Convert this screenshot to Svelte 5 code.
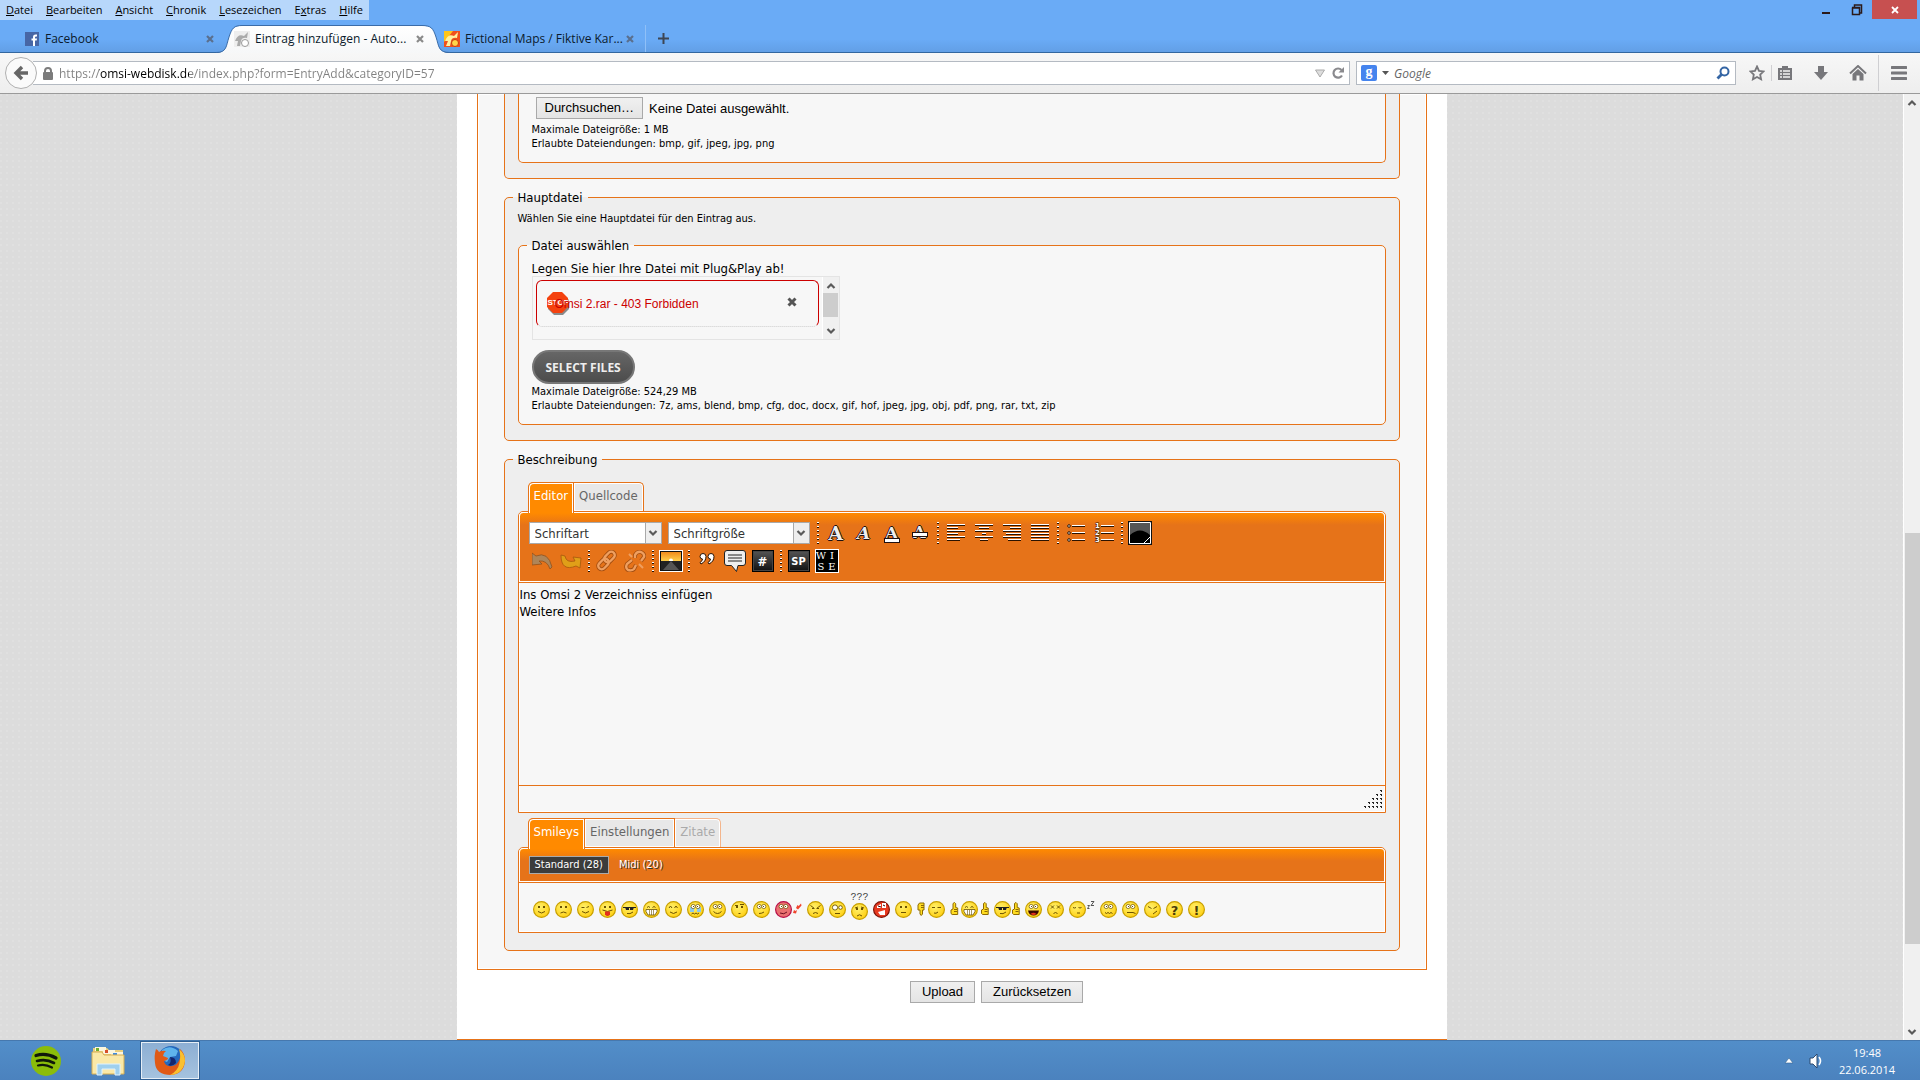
<script>
  const menus = [
    ['', 'D', 'atei'],
    ['', 'B', 'earbeiten'],
    ['', 'A', 'nsicht'],
    ['', 'C', 'hronik'],
    ['', 'L', 'esezeichen'],
    ['E', 'x', 'tras'],
    ['', 'H', 'ilfe'],
  ];

  const ink = '#6b5200';
  const line = (d, c = ink) => `<path d="${d}" fill="none" stroke="${c}"/>`;
  const fill = (d, c = ink) => `<path d="${d}" fill="${c}"/>`;
  const dots = fill('M5 5h2v2H5zM10 5h2v2h-2z');
  const bigEyes = `<g fill="#fff" stroke="${ink}" stroke-width=".7"><circle cx="6.200" cy="5.500" r="2.100"/><circle cx="10.800" cy="5.500" r="2.100"/></g>${fill('M6 5h1v1H6zM10 5h1v1h-1z')}`;
  const grin = `<path d="M3 8.500h11v2L12 14H5l-2-3.500z" fill="#fff" stroke="${ink}" stroke-width=".8"/><path d="M6.500 9v5M8.500 9v5M10.500 9v5" stroke="${ink}" stroke-width=".6"/>`;
  const shades = fill('M2 6h13v1H2zM4 6h4v3H5zM9 6h4l-1 3H9z', '#222');
  const thumbUp = (x) => `<path d="M${x} 9l2-1V2.500l1.500-1 1.200 1.200V6.500l2 .5v6.500h-5.500l-1.200-1z" fill="#ffdc20" stroke="#8d6a00"/>${line(`M${x + 3} 8.500h3M${x + 3} 10.500h3`, '#8d6a00')}`;

  const smileys = [
    { n: 'Lächeln', a: dots + line('M5 10.500q3.500 3 7 0') },
    { n: 'Traurig', a: dots + line('M5.500 12q3-2 6 0') },
    { n: 'Zwinkern', a: line('M4.500 6.500h3M9.500 6.500l2.500-1M5 10.500q3.500 3 7 0') },
    { n: 'Zunge', a: dots + line('M3.500 9q5 3 10 0') + fill('M6 10.500h5v3q-2.500 3-5 0z', '#e3301c') },
    { n: 'Cool', a: shades + line('M6 12.500q3 1 6-1.500') },
    { n: 'Lachen', a: line('M4 6.500q1.500-2 3 0M9.500 6.500q1.500-2 3 0') + grin },
    { n: 'Fröhlich', a: line('M4 7l1.500-2 1.500 2M9.500 7l1.500-2 1.500 2M5 11q3.500 3 7 0') },
    { n: 'Weinen', a: `<path d="M3 6h4v5H3zM10 6h4v5h-4z" fill="#8cc9ee"/>` + bigEyes + line('M4.500 13l1.500-1 1.500 1 1.500-1 1.500 1 1.500-1') },
    { n: 'Augenrollen', a: bigEyes + line('M4.500 10.500q4 4 8 0') },
    { n: 'Staunen', a: dots + line('M4 4.500h3M9 3.500h4M7.500 12.500h2') },
    { n: 'Skeptisch', a: bigEyes + line('M6 12.500q3 0 5-1.500') },
    { n: 'Verliebt', w: 27, tone: 'pink', a: bigEyes + line('M5 12q4 2 7-1', '#6b1020') + fill('M18 12l1-3 1.500 1 1.500-1-1 3.500zM21 7l1.500-3 1.200 1L26 2.500l.5 2-3.500 4z', '#f0442c') },
    { n: 'Böse', a: line('M3.500 4.500l4 3M13.500 4.500l-4 3M6 12.500q2.500-2 5 0') + fill('M5 7h2v1H5zM10 7h2v1h-2z') },
    { n: 'Verwirrt', a: `<g fill="#fff" stroke="${ink}" stroke-width=".9"><circle cx="6" cy="6.500" r="2.600"/><circle cx="11.500" cy="6.500" r="1.800"/></g>` + line('M6 12.500h5') },
    { n: 'Frage', mark: '???', a: dots + line('M4 5l3-1M10 4l3 1M6 13q2.500-2.500 5 0') },
    { n: 'Wütend', tone: 'red', a: fill('M4 5l4-2v4H4zM9 2h4v5H9zM5 11l7-2v5H7z', '#fff') + line('M5 5l3 1M10 4l2 1', '#300') },
    { n: 'Neutral', a: dots + line('M6 11.500h5') },
    { n: 'Daumen runter', w: 28, off: 11, a: line('M4 6.500h3M9.500 6.500h3.500M6 12q2 1 4-1'), side: `<path d="M1 4l1.500-2H7v7H5.500v4L4.200 14.500 3 13V9H1z" fill="#ffdc20" stroke="#8d6a00"/><path d="M4 4.500h3M4 6.500h3" stroke="#8d6a00"/>` },
    { n: 'Beide Daumen', w: 39, off: 11, a: line('M4 6.500q1.500-2 3 0M9.500 6.500q1.500-2 3 0') + grin, side: thumbUp(1) + thumbUp(31.5) },
    { n: 'Daumen hoch', w: 26, a: shades + line('M6 12.500q3 1 6-1.500'), side: thumbUp(18.5) },
    { n: 'Verrückt', a: bigEyes + `<path d="M3 9.500h11q-1 5-5.500 5T3 9.500z" fill="#3a0800"/><path d="M5.500 13q3-2.500 6 0-3 2-6 0z" fill="#e3301c"/>` },
    { n: 'Gequält', a: line('M4 4.500l3 3M7 4.500l-3 3M10 4.500l3 3M13 4.500l-3 3M6.500 12.500q2-2 4 0') },
    { n: 'Schlafen', w: 26, a: line('M4 6.500q1.500 1 3 0M9.500 6.500q1.500 1 3 0M8 12h3'), side: line('M18.500 4.500h2l-2 3h2M22 .5h3l-3 4h3', '#555') },
    { n: 'Übel', a: bigEyes + line('M5 11.500l1.500 1 1.500-1 1.500 1 1.500-1 1.500 1') },
    { n: 'Pfeifen', a: bigEyes + line('M5 11.500h6l2.500 1') },
    { n: 'Fies', a: line('M4 5.500l3.500 2M13 5.500l-3.500 2M9 13l4-3') },
    { n: 'Fragezeichen', glyph: '?', a: '' },
    { n: 'Ausrufezeichen', glyph: '!', a: '' },
  ];
  const tones = {
    yellow: ['url(#face)', '#c8a000'],
    pink: ['#ea7070', '#b81048'],
    red: ['#e83a20', '#7c1208'],
  };

  const aligns = [
    ['Linksbündig', [18, 11, 18, 11, 18, 13]],
    ['Zentriert', [18, 10, 18, 4, 18, 8]],
    ['Rechtsbündig', [18, 11, 18, 15, 18, 13]],
    ['Blocksatz', [18, 18, 18, 18, 18, 18]],
  ];
  const rowStart = (kind, w) => (kind === 'Zentriert' ? (18 - w) / 2 : kind === 'Rechtsbündig' ? 18 - w : 0);

  let url = $state('https://omsi-webdisk.de/index.php?form=EntryAdd&categoryID=57');
  let body = $state('Ins Omsi 2 Verzeichniss einfügen\nWeitere Infos');
</script>

{#snippet cross()}
  <svg width="8" height="8" viewBox="0 0 8 8"><path d="M1 1l6 6M7 1L1 7" stroke="currentColor" stroke-width="2.2" /></svg>
{/snippet}

{#snippet chevron(up)}
  <svg width="10" height="8" viewBox="0 0 10 8"><path d={up ? 'M1.500 6L5 2.500 8.500 6' : 'M1.500 2L5 5.500 8.500 2'} fill="none" stroke="#5a5a5a" stroke-width="2.200" /></svg>
{/snippet}

{#snippet sep()}<span class="sep"></span>{/snippet}

<svg class="defs" width="0" height="0" aria-hidden="true">
  <defs>
    <radialGradient id="face" cx=".4" cy=".35" r=".7"><stop offset="0" stop-color="#fff06a" /><stop offset="1" stop-color="#ffce10" /></radialGradient>
    <linearGradient id="sunset" x2="0" y2="1"><stop offset="0" stop-color="#f08a1c" /><stop offset="1" stop-color="#ffcf4a" /></linearGradient>
    <linearGradient id="tabfill" x2="0" y2="1"><stop offset="0" stop-color="#fff" /><stop offset="1" stop-color="#f6f7f8" /></linearGradient>
  </defs>
</svg>

<div class="window">
  <header class="chrome">
    <div class="titlebar">
      <nav class="menus">
        {#each menus as [pre, key, post]}<button>{pre}<u>{key}</u>{post}</button>{/each}
      </nav>
      <div class="controls">
        <button aria-label="Minimieren"><svg width="12" height="12"><path d="M2 8h8v2H2z" fill="#2b1a1a" /></svg></button>
        <button aria-label="Verkleinern"><svg width="12" height="12"><path d="M3.500 3V1h7v8H9M1 3.500h7.500v7H1.500v-7M1 4h8" fill="none" stroke="#2b1a1a" stroke-width="1.500" /></svg></button>
        <button class="close" aria-label="Schließen"><svg width="8" height="8" viewBox="0 0 8 8"><path d="M1 1l6 6M7 1L1 7" stroke="#fff" stroke-width="1.800" /></svg></button>
      </div>
    </div>
    <div class="tabstrip">
      <div class="tab">
        <svg width="16" height="16"><rect x="1" y="1" width="14" height="14" fill="#4766a5" /><path d="M9 15V9.500H7.500V7.500H9V6q0-2.500 2.500-2.500H13v2h-1q-1 0-1 1v1h2l-.3 2H11V15z" fill="#fff" /></svg>
        <span class="title">Facebook</span><button aria-label="Tab schließen">{@render cross()}</button>
      </div>
      <div class="tab active">
        <svg class="shape" width="234" height="28" viewBox="0 0 234 28"><path d="M0 28C11 28 10 21 13 12 16 3 18 1 26 1H206C215 1 217 3 220 12 223 21 222 28 234 28z" fill="url(#tabfill)" /><path d="M0 27.500C11 27.500 10 21 13 12 16 3 18 .5 26 .5H206C215 .5 217 3 220 12 223 21 222 27.500 234 27.500" fill="none" stroke="#3b6ca8" /></svg>
        <svg width="16" height="16"><path d="M0 0h16v16H0z" fill="#eee" /><path d="M1 10q3-8 9-5l4-4-1 6q-5-1-6 3l-1 5H3l1-5z" fill="#aaa" /><circle cx="11" cy="12" r="3.500" fill="#fff" stroke="#999" /></svg>
        <span class="title">Eintrag hinzufügen - Auto...</span><button aria-label="Tab schließen">{@render cross()}</button>
      </div>
      <div class="tab">
        <svg width="16" height="16"><path d="M0 0h16v16H0z" fill="#f0501c" /><path d="M0 0h9L0 11z" fill="#ffc61a" /><path d="M1 10q3-8 9-5l4-4-1 6q-5-1-6 3l-1 5H2l2-5z" fill="#fff2a0" /><circle cx="11" cy="12" r="3.500" fill="#ffd64a" stroke="#c8380c" /></svg>
        <span class="title">Fictional Maps / Fiktive Kar...</span><button aria-label="Tab schließen">{@render cross()}</button>
      </div>
      <button class="newtab" aria-label="Neuer Tab"><svg width="11" height="11"><path d="M5.500 0v11M0 5.500h11" stroke="#3d4654" stroke-width="2" /></svg></button>
    </div>
    <div class="navbar">
      <button class="back" aria-label="Zurück"><svg width="16" height="16"><path d="M9 2L3 8l6 6M3 8h12" fill="none" stroke="#666" stroke-width="3.400" /></svg></button>
      <div class="address">
        <svg width="10" height="13"><rect y="5" width="10" height="8" rx="1" fill="#7c7c7c" /><path d="M2 6V4q0-3 3-3t3 3v2" fill="none" stroke="#7c7c7c" stroke-width="2" /></svg>
        <input class="url" aria-label="Adresse" bind:value={url} />
        <svg width="10" height="9"><path d="M.5 1h9L5 8z" fill="#ddd" stroke="#aaa" /></svg>
        <button aria-label="Neu laden"><svg width="14" height="14"><path d="M11 9.500A4.600 4.600 0 1 1 10.500 4" fill="none" stroke="#8a8a8e" stroke-width="2.200" /><path d="M7.500 6.500h5.500V1z" fill="#8a8a8e" /></svg></button>
      </div>
      <div class="search">
        <span class="engine">g</span>
        <svg width="7" height="4"><path d="M0 0h7L3.500 4z" fill="#555" /></svg>
        <input aria-label="Suche" placeholder="Google" />
        <svg width="14" height="14"><circle cx="8.500" cy="5.500" r="4" fill="none" stroke="#3465a4" stroke-width="2" /><path d="M5.500 8.500L1.500 12.500" stroke="#3465a4" stroke-width="2.800" /></svg>
      </div>
      <div class="actions">
        <button aria-label="Lesezeichen"><svg width="16" height="16"><path d="M8 1.500l2 4.300 4.600.6-3.400 3.200.9 4.700L8 12l-4.100 2.300.9-4.700L1.400 6.400 6 5.800z" fill="none" stroke="#77777b" stroke-width="1.800" /></svg></button>
        <span class="bar short"></span>
        <button aria-label="Lesezeichenliste"><svg width="16" height="16"><path d="M1 3h4V1h6v2h4v12H1z" fill="#77777b" /><path d="M3 6h2m1 0h7M3 9h2m1 0h7M3 12h2m1 0h7" stroke="#f4f4f4" stroke-width="1.500" /></svg></button>
        <button class="down" aria-label="Downloads"><svg width="16" height="16"><path d="M5 1h6v6h4l-7 8-7-8h4z" fill="#77777b" /></svg></button>
        <button class="home" aria-label="Startseite"><svg width="18" height="16"><path d="M1 8.500L9 1l8 7.500" fill="none" stroke="#77777b" stroke-width="2" /><path d="M3.500 9L9 4l5.500 5v6.500h-4v-5h-3v5h-4z" fill="#77777b" /></svg></button>
        <span class="bar"></span>
        <button aria-label="Menü"><svg width="16" height="14"><path d="M1 1.500h14M1 7h14M1 12.500h14" stroke="#77777b" stroke-width="3" stroke-linecap="round" /></svg></button>
      </div>
    </div>
  </header>

  <div class="viewport">
    <main class="page">
      <form class="sheet" onsubmit={(e) => e.preventDefault()}>
        <div class="panel">
          <section class="group cut">
            <div class="inner cut">
              <div class="filepick">
                <label class="sysbtn" for="preview">Durchsuchen…</label>
                <input id="preview" class="hidden" type="file" />
                <span>Keine Datei ausgewählt.</span>
              </div>
              <p class="hint">Maximale Dateigröße: 1 MB</p>
              <p class="hint">Erlaubte Dateiendungen: bmp, gif, jpeg, jpg, png</p>
            </div>
          </section>

          <fieldset class="group">
            <legend>Hauptdatei</legend>
            <p class="lead">Wählen Sie eine Hauptdatei für den Eintrag aus.</p>
            <fieldset class="inner">
              <legend>Datei auswählen</legend>
              <p class="drop">Legen Sie hier Ihre Datei mit Plug&amp;Play ab!</p>
              <div class="queue">
                <div class="failed">
                  <span class="stop"><svg width="24" height="24"><path d="M8 2h9l6 6v9l-6 6H8l-6-6V8z" fill="#8a8a8a" /><path d="M7 0h9l6 6v9l-6 6H7l-6-6V6z" fill="#f4420f" /></svg><b>STOP</b></span>
                  <span class="name">Omsi 2.rar - 403 Forbidden</span>
                  <button aria-label="Entfernen"><svg width="10" height="10"><path d="M1.500 1.500l7 7M8.500 1.500l-7 7" stroke="#555" stroke-width="3" /></svg></button>
                </div>
                <div class="minibar">{@render chevron(true)}<span></span>{@render chevron(false)}</div>
              </div>
              <button class="select" type="button">SELECT FILES</button>
              <p class="hint">Maximale Dateigröße: 524,29 MB</p>
              <p class="hint">Erlaubte Dateiendungen: 7z, ams, blend, bmp, cfg, doc, docx, gif, hof, jpeg, jpg, obj, pdf, png, rar, txt, zip</p>
            </fieldset>
          </fieldset>

          <fieldset class="group last">
            <legend>Beschreibung</legend>
            <div class="cards">
              <button type="button" class="on">Editor</button><button type="button">Quellcode</button>
            </div>
            <div class="box">
              <div class="toolbar">
                <div class="row">
                  <span class="combo"><select aria-label="Schriftart"><option>Schriftart</option></select><i>{@render chevron(false)}</i></span>
                  <span class="combo wide"><select aria-label="Schriftgröße"><option>Schriftgröße</option></select><i>{@render chevron(false)}</i></span>
                  {@render sep()}
                  <button type="button" class="tool letter" aria-label="Fett">A</button>
                  <button type="button" class="tool letter ital" aria-label="Kursiv">A</button>
                  <button type="button" class="tool letter under" aria-label="Unterstrichen">A</button>
                  <button type="button" class="tool letter strike" aria-label="Durchgestrichen">A</button>
                  {@render sep()}
                  {#each aligns as [name, rows]}
                    <button type="button" class="tool" aria-label={name}>
                      <svg width="18" height="18">{#each rows as w, i}<rect x={rowStart(name, w)} y={i * 3} width={w} height="1" fill="#fff" /><rect x={rowStart(name, w)} y={i * 3 + 1} width={w} height="1" fill="#2a1200" />{/each}</svg>
                    </button>
                  {/each}
                  {@render sep()}
                  <button type="button" class="tool" aria-label="Liste">
                    <svg width="18" height="18">{#each [2, 9, 16] as y}<circle cx="2" cy={y} r="1.300" fill="#fff" stroke="#2a1200" /><path d="M5 {y - .5}h13" stroke="#fff" /><path d="M5 {y + .5}h13" stroke="#2a1200" />{/each}</svg>
                  </button>
                  <button type="button" class="tool" aria-label="Nummerierte Liste">
                    <svg width="20" height="24">{#each [5, 12, 19] as y, i}<text x="1" y={y + 2} font-size="7" font-weight="700" font-family="DejaVu Sans" fill="#fff" stroke="#2a1200" stroke-width="1" paint-order="stroke">{i + 1}</text><path d="M7 {y - .5}h13" stroke="#fff" /><path d="M7 {y + .5}h13" stroke="#2a1200" />{/each}</svg>
                  </button>
                  {@render sep()}
                  <button type="button" class="tool" aria-label="Textfarbe"><svg width="24" height="24"><path d="M0 0h24v24H0z" fill="#111" /><path d="M1.500 1.500h21v21h-21z" fill="#000" stroke="#fff" /><path d="M2 2h20v12q-10-9-20 0z" fill="#555" /><path d="M16 22l6-6" stroke="#fff" /></svg></button>
                </div>
                <div class="row second">
                  <button type="button" class="tool faded" aria-label="Rückgängig"><svg width="22" height="18"><path d="M0 1l4 3q12-5 16 11l-2 2Q15 8 7 9l3 3-10 1z" fill="#a88860" stroke="#8a4c1a" stroke-width=".8" /></svg></button>
                  <button type="button" class="tool faded" aria-label="Wiederholen"><svg width="22" height="18"><path d="M1 3l4 1q1 7 10 5l-2-4 8 1-1 10-4-2Q1 20 1 3z" fill="#e0a418" stroke="#a0560c" stroke-width=".8" /></svg></button>
                  {@render sep()}
                  <button type="button" class="tool faded" aria-label="Link"><svg width="22" height="22"><g fill="none" stroke="#9c4a10" stroke-width="4"><rect x="10" y="1" width="7" height="12" rx="3.500" transform="rotate(45 13.500 7)" /><rect x="4" y="8" width="7" height="12" rx="3.500" transform="rotate(45 7.500 14)" /></g><g fill="none" stroke="#f0a468" stroke-width="2.400"><rect x="10" y="1" width="7" height="12" rx="3.500" transform="rotate(45 13.500 7)" /><rect x="4" y="8" width="7" height="12" rx="3.500" transform="rotate(45 7.500 14)" /></g></svg></button>
                  <button type="button" class="tool faded" aria-label="Link entfernen"><svg width="22" height="22"><g fill="none" stroke="#9c4a10" stroke-width="4"><path d="M11 8V5q2-4 6-3 4 2 3 5l-3 4M8 10l-5 4q-2 4 1 6 4 1 6-1l2-4" /></g><g fill="none" stroke="#f0a468" stroke-width="2.400"><path d="M11 8V5q2-4 6-3 4 2 3 5l-3 4M8 10l-5 4q-2 4 1 6 4 1 6-1l2-4" /></g><path d="M5 4l3 3M15 14l4 4" stroke="#f0a468" stroke-width="2" /></svg></button>
                  {@render sep()}
                  <button type="button" class="tool" aria-label="Bild"><svg width="24" height="22"><path d="M0 0h24v22H0z" fill="#fff" /><path d="M1 1h22v20H1z" fill="#111" /><path d="M2 2h20v9H2z" fill="url(#sunset)" /><circle cx="12" cy="10.500" r="2" fill="#fff" /><path d="M2 11h20v9H2z" fill="#222" /><path d="M12 11l8 9H4z" fill="#555" /></svg></button>
                  {@render sep()}
                  <button type="button" class="tool quote" aria-label="Zitat"><svg width="18" height="14"><path d="M2 4.500a3 3 0 1 1 6 0q0 5-5 7.500l-1-1.500q2.500-1.500 2.500-3.500Q2 7 2 4.500zM10 4.500a3 3 0 1 1 6 0q0 5-5 7.500l-1-1.500q2.500-1.500 2.500-3.500Q10 7 10 4.500z" fill="#fff" stroke="#2a1200" /></svg></button>
                  <button type="button" class="tool" aria-label="Kommentar"><svg width="24" height="24"><path d="M4 1.500h16q2.500 0 2.500 2.500v10q0 2.500-2.500 2.500h-5l-1.500 6-5-6H4Q1.500 16.500 1.500 14V4Q1.500 1.500 4 1.500z" fill="#eee" stroke="#222" /><path d="M5 6h14M5 9h14M5 12h14" stroke="#222" stroke-width="1.200" /></svg></button>
                  <button type="button" class="tool" aria-label="Code"><span class="key hash">#</span></button>
                  {@render sep()}
                  <button type="button" class="tool" aria-label="Spoiler"><span class="key">SP</span></button>
                  <button type="button" class="tool" aria-label="Wise"><span class="wise"><b>W</b><b>I</b><b>S</b><b>E</b></span></button>
                </div>
              </div>
              <textarea aria-label="Beschreibung" bind:value={body}></textarea>
              <div class="status">
                <svg width="20" height="18">{#each [0, 1, 2, 3, 4] as r}{#each Array(r + 1) as _, c}<rect x={17 - c * 4} y={r * 4} width="2" height="1" fill="#222" /><rect x={18 - c * 4} y={r * 4 + 1} width="1" height="1" fill="#222" />{/each}{/each}</svg>
              </div>
            </div>
            <div class="cards low">
              <button type="button" class="on">Smileys</button><button type="button">Einstellungen</button><button type="button" class="off">Zitate</button>
            </div>
            <div class="box">
              <div class="toolbar sets">
                <button type="button" class="chosen">Standard (28)</button>
                <button type="button">Midi (20)</button>
              </div>
              <div class="smileys">
                {#each smileys as s}
                  {@const tone = tones[s.tone ?? 'yellow']}
                  <button type="button" class:low={s.mark} aria-label={s.n}>
                    {#if s.mark}<span class="mark">{s.mark}</span>{/if}
                    <svg width={s.w ?? 17} height="17" viewBox="0 0 {s.w ?? 17} 17">
                      <g transform="translate({s.off ?? 0} 0)">
                        <circle cx="8.500" cy="8.500" r="7.900" fill={tone[0]} stroke={tone[1]} stroke-width="1.200" />
                        {@html s.a}
                        {#if s.glyph}<text x="8.500" y="13.500" text-anchor="middle" font-family="DejaVu Sans" font-weight="700" font-size="13" fill="#4a3c08">{s.glyph}</text>{/if}
                      </g>
                      {@html s.side ?? ''}
                    </svg>
                  </button>
                {/each}
              </div>
            </div>
          </fieldset>
        </div>
        <div class="submit">
          <button class="sysbtn" type="submit">Upload</button>
          <button class="sysbtn" type="reset">Zurücksetzen</button>
        </div>
      </form>
    </main>
    <div class="scrollbar">
      {@render chevron(true)}
      <div class="track"><span></span></div>
      {@render chevron(false)}
    </div>
  </div>

  <footer class="taskbar">
    <button aria-label="Spotify"><svg width="32" height="32"><circle cx="16" cy="16" r="15" fill="#8bbd0a" /><g fill="none" stroke="#10180a" stroke-linecap="round"><path d="M6 10.500q10-3 20 2.500" stroke-width="3.200" /><path d="M7 16q9-2.500 17 2" stroke-width="2.600" /><path d="M8 20.500q7-2 14 2" stroke-width="2.200" /></g></svg></button>
    <button aria-label="Explorer"><svg width="34" height="32"><path d="M2 3h14l2 2h14v22H2z" fill="#e9cf80" /><path d="M4 2h11v4H4z" fill="#fbf6df" /><path d="M5 3h3v3H5z" fill="#6fae2e" /><path d="M12 5h12v4H12z" fill="#fbf6df" /><path d="M14 5h3v3h-3z" fill="#d8502a" /><path d="M20 7h12v4H20z" fill="#fbf6df" /><path d="M22 8h4v2h-4z" fill="#3e8be0" /><path d="M1 7h10l2 3h20v19H1z" fill="#fae9a8" stroke="#d6ae52" /><path d="M6 30V19h23v11h-5v-6H11v6z" fill="#9fd0ee" stroke="#dff2ff" /></svg></button>
    <button class="running" aria-label="Firefox"><svg width="32" height="32"><circle cx="17" cy="14" r="13" fill="#2468bc" /><path d="M8 5q8-6 16 1l-2 5-6 1-3 5-5-2z" fill="#5fb4ec" /><path d="M16 12q6 0 6 6-4 4-8 2 4-2 2-8z" fill="#14266e" /><path d="M2 4q2 1 3 3 3-2 7-1-3 2-3 5l5 2q0 2-4 3 1 6 8 5 6-1 8-8 1-5 0-9 5 4 5 12-1 13-14 14Q2 30 1 18 0 10 2 4z" fill="#e05a16" /><path d="M25 4q6 5 6 12-1 8-7 12-4 2-8 2 8-4 9.500-12Q27 10 25 4z" fill="#f9c030" /></svg></button>
    <div class="tray">
      <svg width="8" height="6"><path d="M4 0l4 5H0z" fill="#fff" stroke="#356494" stroke-width=".6" /></svg>
      <svg width="16" height="16"><path d="M2 5h3l4-4v14l-4-4H2z" fill="#fff" stroke="#2c4b70" /><path d="M11 4q3 4 0 8" fill="none" stroke="#fff" stroke-width="1.600" /></svg>
      <time>19:48<br />22.06.2014</time>
    </div>
  </footer>
</div>

<style>
  :global(body) { margin: 0; }
  * { box-sizing: border-box; }
  .window { display: flex; flex-direction: column; min-height: 100vh; font-family: "DejaVu Sans Condensed", "DejaVu Sans", sans-serif; font-size: 13px; color: #000; }
  .defs { position: absolute; }
  button { margin: 0; padding: 0; border: 0; background: none; font: inherit; color: inherit; }
  p { margin: 0; }
  svg { display: block; flex: none; }

  .chrome { font-family: "Open Sans", sans-serif; font-size: 12px; background: #6aabf6; }
  .titlebar { display: flex; justify-content: space-between; height: 20px; }
  .menus { display: flex; gap: 13px; padding: 0 6px; background: #b7d7fb; font-size: 11px; line-height: 20px; white-space: nowrap; }
  .controls { display: flex; height: 19px; padding-right: 3px; }
  .controls button { display: grid; place-items: center; width: 31px; }
  .controls button.close { width: 45px; background: #c75050; }

  .tabstrip { display: flex; align-items: center; gap: 20px; height: 33px; padding: 5px 0 0 24px; border-bottom: 1px solid #33679f; background: linear-gradient(#6aabf6 60%, #629fe6); }
  .tab { position: relative; display: flex; align-items: center; gap: 5px; width: 190px; height: 27px; color: #0b1a2c; }
  .tab > * { position: relative; }
  .tab .title { flex: 1; min-width: 0; white-space: nowrap; }
  .tab button { color: #5a6f8e; }
  .tab.active button { color: #8a8a8a; }
  .tab .shape { position: absolute; left: -18px; top: 0; }
  .newtab { display: grid; place-items: center; width: 36px; height: 27px; margin-left: -9px; border-left: 1px solid #8fc0f8; }

  .navbar { display: flex; align-items: center; height: 41px; padding-left: 5px; border-bottom: 1px solid #9a9a9a; background: linear-gradient(#f7f7f7, #eee); }
  .back { position: relative; display: grid; place-items: center; width: 32px; height: 32px; border: 1px solid #b0b0b0; border-radius: 50%; background: #fafafa; }
  .address, .search { display: flex; align-items: center; height: 24px; border: 1px solid #b4bac2; background: #fff; }
  .address { flex: 1; gap: 6px; margin-left: -4px; padding: 0 4px 0 10px; border-left: 0; }
  .address input, .search input { flex: 1; min-width: 0; padding: 0; border: 0; outline: 0; background: none; font: inherit; }
  .address .url { color: transparent; background: linear-gradient(90deg, #808080 40px, #000 40px, #000 130px, #808080 130px); background-clip: text; -webkit-background-clip: text; }
  .search { gap: 5px; width: 380px; margin-left: 6px; padding: 0 5px 0 4px; }
  .search input::placeholder { color: #666; font-style: italic; opacity: 1; }
  .engine { width: 16px; height: 16px; border-radius: 2px; background: #4584ee; color: #fff; font: 700 14px/13px "Liberation Serif", serif; text-align: center; }
  .actions { display: flex; align-items: center; justify-content: space-between; width: 184px; height: 40px; padding: 0 13px 0 13px; }
  .bar { width: 1px; height: 36px; background: #cfcfd2; }
  .bar.short { height: 16px; margin: 0 -6px; }
  .down { margin-left: 8px; }
  .home { margin-left: 8px; }

  .viewport { display: flex; flex: 1; }
  .page { flex: 1; display: flex; flex-direction: column; align-items: center; background: radial-gradient(circle at 1px 1px, #e0e0e0 1px, transparent 1px) 0 0 / 6px 6px #dcdcdc; }
  .sheet { display: flex; flex-direction: column; flex: 1; width: 100%; max-width: 990px; padding: 0 20px; border-bottom: 1px solid #e67319; background: #fff; }
  .panel { padding: 0 26px 18px; border: 1px solid #e67319; border-top: 0; background: #f7f7f7; box-shadow: inset 0 0 0 1px #fff; }
  .group, .inner { min-width: 0; margin: 0; border: 1px solid #e67319; border-radius: 5px; }
  .group { padding: 6px 13px 15px; background: #eee; }
  fieldset.group { margin-top: 9px; }
  .inner { padding: 8px 13px 11px; background: #f7f7f7; }
  fieldset.inner { margin-top: 10px; }
  .cut { padding-top: 0; border-top: 0; border-radius: 0 0 5px 5px; }
  .inner.cut { padding-top: 3px; }
  .group.last { padding-top: 14px; padding-bottom: 17px; }
  legend { margin-left: -5px; padding: 2px 5px 0; line-height: 16px; }
  .lead, .hint { font-size: 11px; line-height: 14px; }
  .drop { line-height: 14px; }

  .filepick { display: flex; align-items: center; gap: 6px; margin-bottom: 4px; padding-left: 4px; font: 13px "Liberation Sans", Arial, sans-serif; }
  .hidden { position: absolute; width: 1px; height: 1px; opacity: 0; }
  .sysbtn { height: 22px; padding: 0 11px; border: 1px solid #a9a9a9; background: linear-gradient(#f0f0f0, #e4e4e4); font: 13px/20px "Liberation Sans", Arial, sans-serif; }
  .filepick .sysbtn { padding: 0 8px; }

  .queue { display: flex; justify-content: space-between; width: 308px; height: 64px; border: 1px solid #e4e4e4; }
  .failed { display: flex; align-items: center; width: 283px; height: 47px; margin: 3px 0 0 3px; padding: 0 21px 0 9px; border: 1px solid #c00; border-bottom: 1px dotted #ccc; border-radius: 6px; color: #c00; font: 12px "Liberation Sans", Arial, sans-serif; }
  .stop { position: relative; }
  .stop b { position: absolute; left: 2px; top: 6px; color: #fff; font-size: 8px; }
  .name { position: relative; flex: 1; margin-left: -15px; }
  .failed button { padding-bottom: 4px; }
  .minibar { display: flex; flex-direction: column; align-items: center; justify-content: space-between; width: 17px; padding: 5px 0 4px; border-left: 1px solid #fff; background: #f0f0f0; }
  .minibar span { width: 15px; height: 24px; margin-bottom: 8px; background: #cdcdcd; }
  .select { display: block; height: 34px; margin: 10px 0 1px; padding: 0 12px; border: 2px solid #777; border-radius: 17px; background: linear-gradient(#666, #4c4c4c); color: #eee; font: 700 12px "Open Sans", sans-serif; }

  .cards { position: relative; display: flex; height: 30px; margin: 0 0 -1px 10px; }
  .cards.low { margin-top: 5px; }
  .cards button { height: 29px; padding: 0 5px 3px; border: 1px solid #e67319; border-left: 0; border-bottom: 0; background: #e8e8e8; box-shadow: inset 0 0 0 1px #fff; color: #666; }
  .cards button:first-child { border-left: 1px solid #e67319; border-top-left-radius: 5px; }
  .cards button:last-child { border-top-right-radius: 5px; }
  .cards .on { height: 31px; padding-bottom: 5px; background: #ff8a00; box-shadow: inset 1px 1px #fff, inset -1px 0 #fff; color: #fff; }
  .cards .off { border-color: #f3b58c; color: #aaa; }
  .box { border: 1px solid #e67319; border-radius: 5px 5px 0 0; background: #f7f7f7; box-shadow: inset 0 0 0 1px #fff; }
  .toolbar { display: flex; flex-direction: column; gap: 4px; padding: 8px 9px; border: 1px solid #fff; border-radius: 4px 4px 0 0; background: linear-gradient(#ff8a00, #e67319 12px); }
  .row { display: flex; align-items: center; gap: 4px; height: 24px; }
  .second { padding-left: 2px; }
  .combo { position: relative; width: 133px; height: 22px; margin-right: 2px; }
  .combo.wide { width: 142px; }
  .combo select { width: 100%; height: 22px; padding: 0 5px; border: 1px solid #a9a9a9; border-radius: 0; appearance: none; background: #fff; color: #333; font: inherit; }
  .combo i { position: absolute; right: 1px; top: 1px; display: grid; place-items: center; width: 16px; height: 20px; border-left: 1px solid #a9a9a9; background: #eee; pointer-events: none; }
  .sep { width: 4px; height: 22px; background: repeating-linear-gradient(#fff 0 1px, #2a1200 1px 2px, transparent 2px 4px) center / 2px 100% no-repeat; }
  .tool { display: grid; place-items: center; width: 24px; height: 24px; }
  .letter { position: relative; color: #eee; font: 700 19px/24px "DejaVu Serif", serif; text-shadow: 1px 0 #201010, -1px 0 #201010, 0 1px #201010, 0 -1px #201010; }
  .ital { font-size: 17px; font-style: italic; }
  .under { font-size: 17px; line-height: 22px; }
  .strike { font-size: 16px; }
  .under::after, .strike::after { content: ""; position: absolute; left: 4px; right: 4px; height: 3px; border: 1px solid #201010; background: #fff; }
  .under::after { bottom: 2px; }
  .strike::after { top: 11px; }
  .quote { padding-bottom: 5px; }
  .faded { opacity: .9; }
  .key { display: grid; place-items: center; width: 22px; height: 22px; border: 1px solid #000; background: linear-gradient(#555, #111); box-shadow: inset 0 0 0 1px #444; color: #fff; font: 700 11px "DejaVu Sans Condensed", sans-serif; }
  .hash { font-size: 13px; }
  .wise { display: grid; grid-template-columns: 1fr 1fr; place-items: center; width: 24px; height: 24px; border: 1px solid #fff; background: #000; color: #fff; font: 10px/11px "DejaVu Serif", serif; }
  .wise b { font-weight: 400; }

  textarea { display: block; width: 100%; height: 203px; padding: 3px 1px; border: 0; border-top: 1px solid #e67319; outline: 0; resize: none; background: none; font: inherit; line-height: 17px; }
  .status { display: flex; justify-content: flex-end; align-items: center; height: 27px; padding-right: 2px; border-top: 1px solid #e67319; }
  .toolbar.sets { flex-direction: row; align-items: center; justify-content: flex-start; gap: 4px; height: 34px; padding: 0 9px; }
  .sets button { height: 18px; padding: 0 5px; border: 1px solid transparent; color: #fff; font-size: 11px; line-height: 16px; text-shadow: 1px 1px #333; }
  .sets .chosen { border-color: #aaa; background: #3c3c3c; }
  .smileys { display: flex; flex-wrap: wrap; gap: 5px; height: 50px; padding: 18px 14px 0; border-top: 1px solid #e67319; }
  .smileys button { position: relative; height: 17px; }
  .smileys .low { margin-top: 2px; }
  .mark { position: absolute; left: 0; top: -10px; color: #444; font: 10px/10px "Liberation Mono", monospace; }

  .submit { display: flex; justify-content: center; gap: 6px; padding: 11px 0 36px 90px; }

  .scrollbar { display: flex; flex-direction: column; align-items: center; width: 17px; padding: 5px 0 4px; border-left: 1px solid #fff; background: #f0f0f0; }
  .track { flex: 1; width: 15px; display: flex; flex-direction: column; padding: 426px 0 84px; }
  .track span { flex: 1; background: #cdcdcd; }

  .taskbar { display: flex; align-items: center; height: 40px; border-top: 1px solid #4678ae; background: linear-gradient(#528ec9, #4b82be); font-family: "Open Sans", sans-serif; color: #fff; }
  .taskbar button { display: grid; place-items: center; width: 62px; height: 39px; }
  .taskbar button:first-child { margin-left: 15px; }
  .taskbar .running { width: 58px; height: 37px; margin-left: 2px; border: 1px solid #e6eef6; outline: 1px solid #2f5f93; background: linear-gradient(#8dafd4, #a5c2de); }
  .tray { display: flex; align-items: center; gap: 15px; margin-left: auto; padding-right: 25px; }
  time { text-align: center; font-size: 11px; line-height: 17px; }
</style>
